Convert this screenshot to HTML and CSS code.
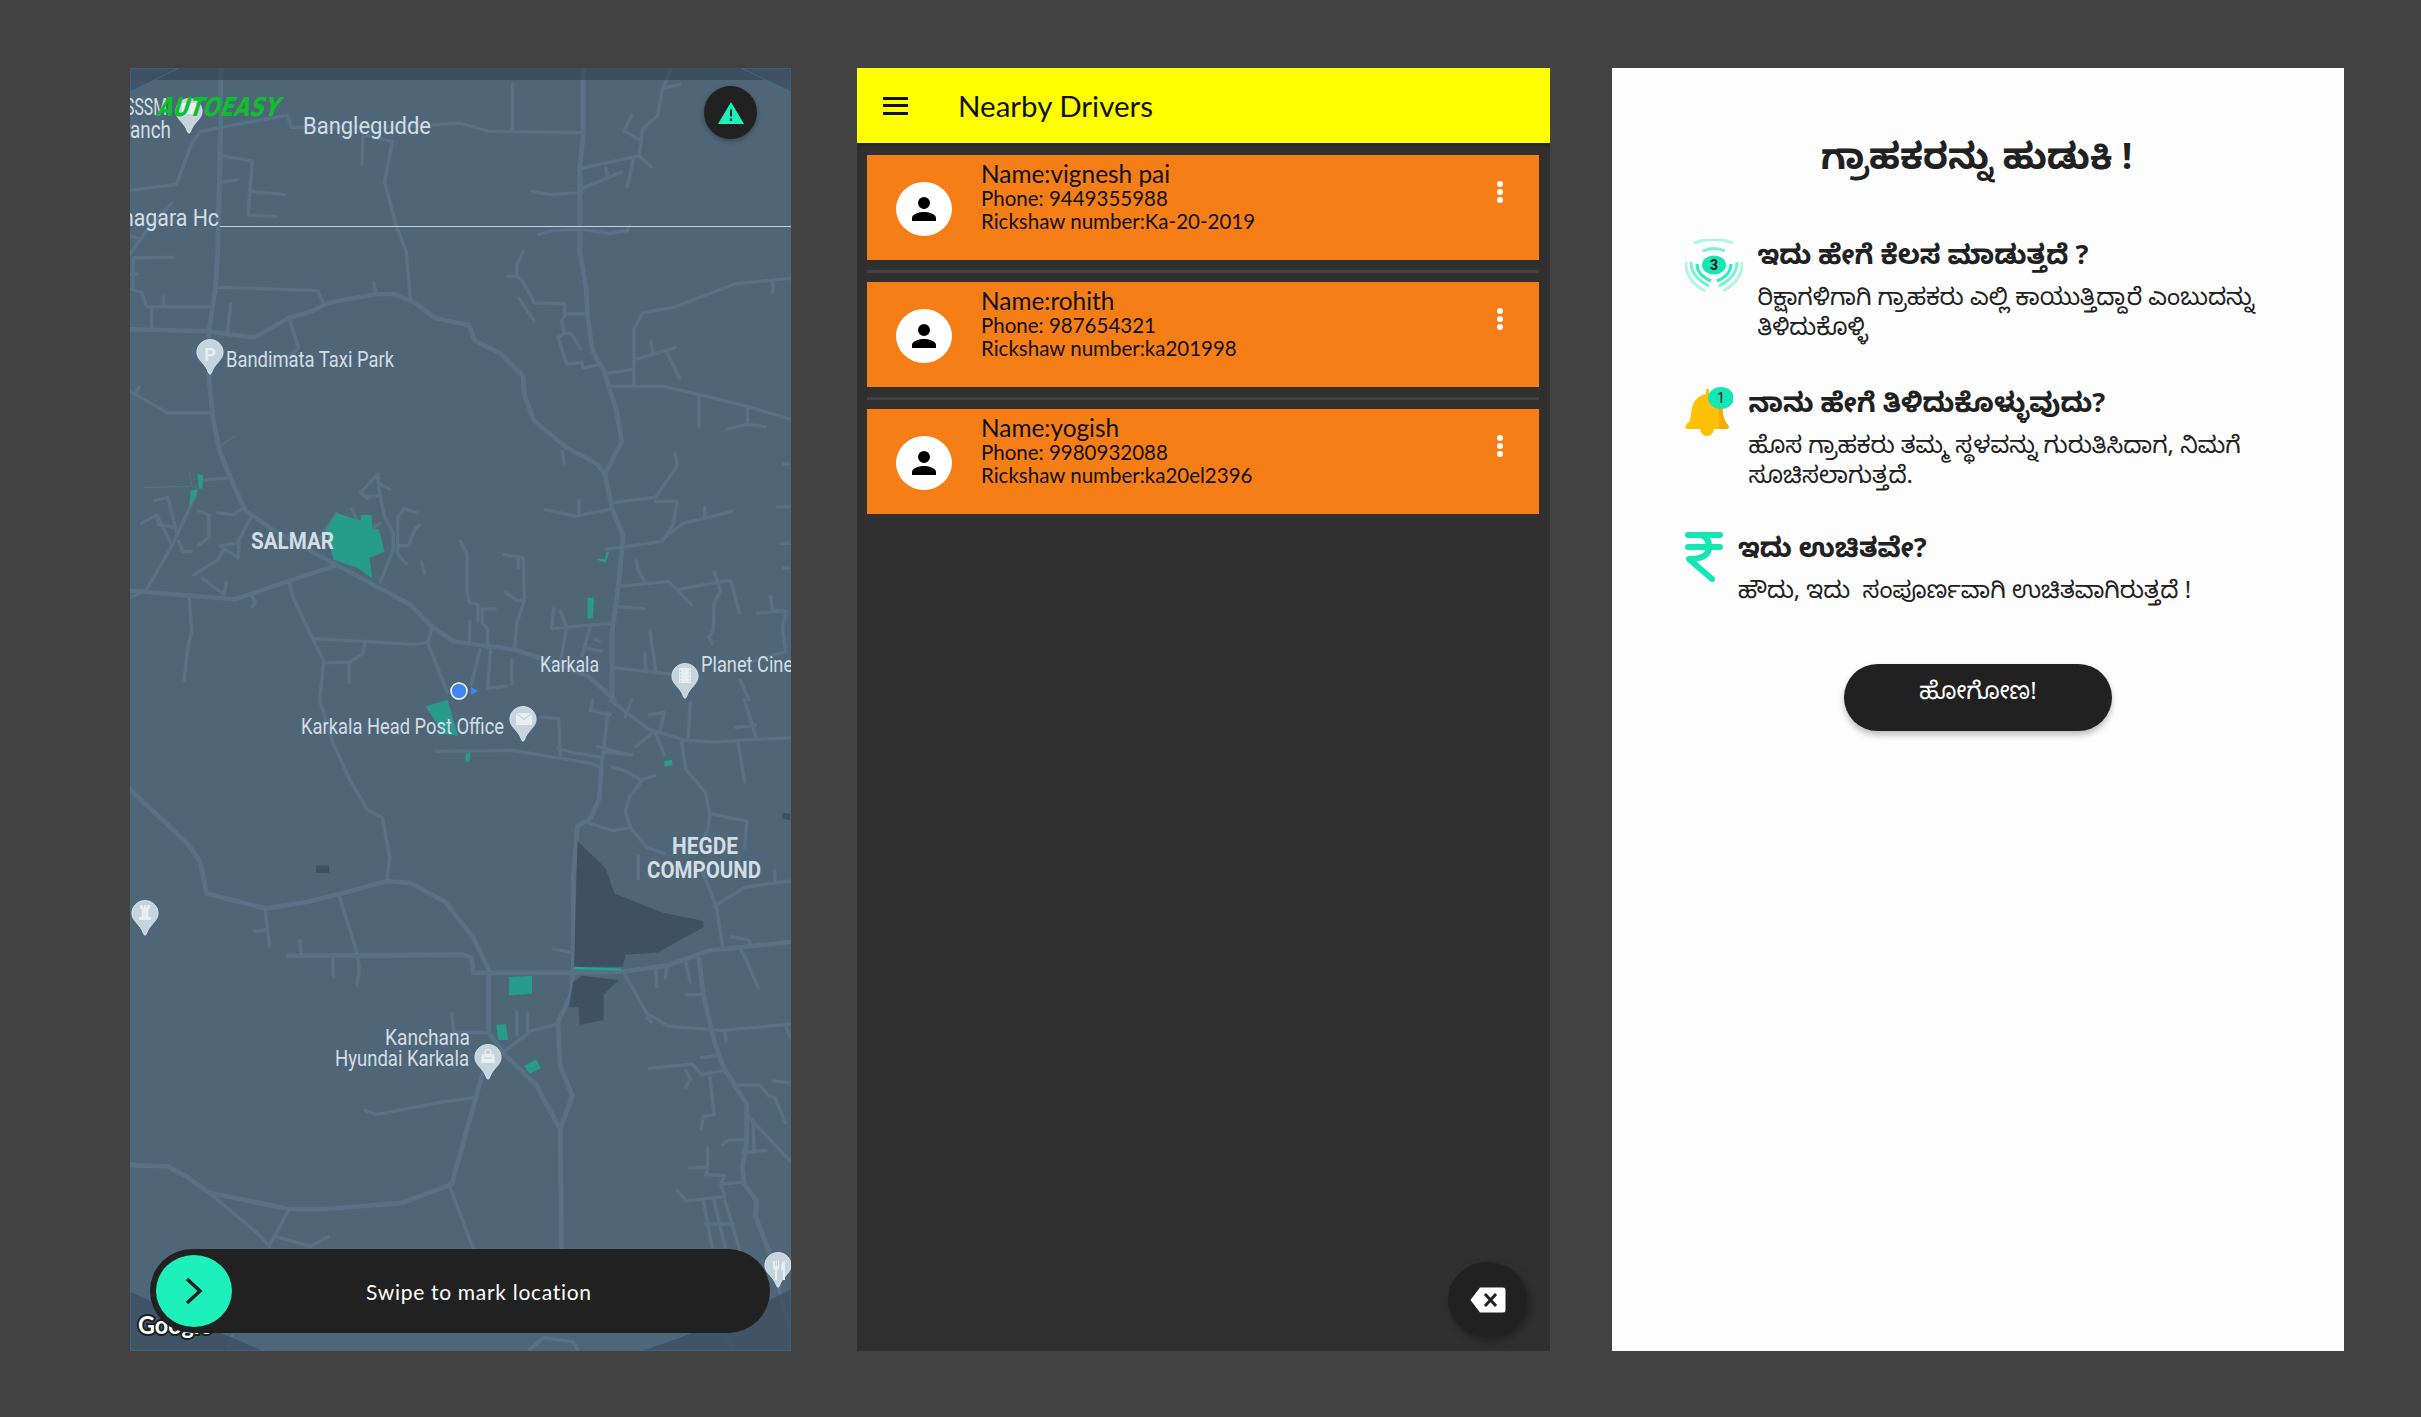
FILE: index.html
```html
<!DOCTYPE html>
<html lang="kn">
<head>
<meta charset="utf-8">
<title>AutoEasy</title>
<link rel="stylesheet" href="styles.css">
</head>
<body>
<main class="stage">

<section class="panel map-panel">
<svg class="map" viewBox="130 68 661 1283" preserveAspectRatio="none" xmlns="http://www.w3.org/2000/svg">
  <defs>
    <symbol id="pin" viewBox="-1 -1 32 42">
      <path d="M15 0C6.700 0 0 6.600 0 14.600C0 24 10 27 13.500 38.500Q15 41 16.500 38.500C20 27 30 24 30 14.600C30 6.600 23.300 0 15 0Z" fill="#c6d4de" stroke="#dfe7ed" stroke-width="1"/>
    </symbol>
  </defs>
  <rect class="land" x="130" y="68" width="661" height="1283"/>

  <g class="roads" transform="translate(120 60) scale(.4337 .408)">
    <path class="r-major" d="M232 20L232 180L225 480L220 560L205 665L205 780L215 880L230 960L265 1050L290 1105L350 1150L495 1235L670 1335L720 1390L770 1425L910 1445L1010 1480L1080 1510L1140 1568"/>
    <path class="r-major" d="M1068 20L1068 180L1060 270L1060 470L1075 560L1078 630L1090 715L1115 760L1145 860L1157 935L1118 1015L1135 1100L1160 1165L1150 1280L1135 1400L1135 1568"/>
    <path class="r-major" d="M20 660L200 665L310 680L390 632L445 615L480 595L585 575L630 573L680 595L725 632L805 650L818 688L878 720L930 775L932 820L955 885L1030 950L1100 990L1118 1015"/>
    <path class="r-major" d="M20 1300L130 1310L265 1322L395 1275L495 1240"/>
    <path d="M20 320L130 305L165 205L185 175L385 135L395 165L620 165L785 155L850 175L1065 178"/>
    <path d="M905 60L905 175M1270 20L1250 75L1240 135L1205 170L1197 235L1065 265M1250 70L1290 60M1165 175L1197 195M1180 135L1162 175M1197 235L1225 262M1183 245L1170 310M1065 315L1155 275M1120 265L1125 285M950 322L990 330L1065 325"/>
    <path d="M235 235L305 248L295 380L360 384M300 322L380 330M235 300L272 293M560 185L558 255M570 185L628 200L610 300L635 400L660 470L670 590M228 557L455 565L472 600"/>
    <path d="M585 545L590 572M390 635L412 705L380 740M255 598L248 670M20 560L50 570L62 605L205 605M100 580L100 605M73 610L73 655M20 480L60 420L120 350M30 485L30 560M30 485L122 483M20 430L50 440M20 525L40 525"/>
    <path d="M1140 800L1255 800L1335 820L1450 850L1545 880M1335 825L1335 900M1447 850L1447 890M1400 905L1445 893L1488 898M1120 768L1185 758M1130 800L1185 800L1185 660L1205 620L1280 605L1420 548L1545 535M1505 540L1505 570M1185 735L1280 705M1225 690L1228 720M1260 715L1290 780"/>
    <path d="M965 428L1000 418L1060 415L1130 425L1170 418L1175 405M930 470L915 500L915 530L895 530M915 530L930 545L955 595L1025 598L1025 630L1018 640L1025 670L1010 680L1030 745L1065 742L1068 755L1100 748M920 585L955 640M1025 622L1075 622M1025 670L1040 670L1062 708"/>
    <path d="M20 810L110 865L205 865M45 800L35 820M190 1030L245 1025M175 1065L120 1190L60 1300M50 1135L85 1115L120 1190M80 1080L110 1072L130 1155M85 1115L90 1140L125 1145M135 1180L145 1205L165 1205M20 1320L60 1300"/>
    <path d="M180 1105L205 1115L205 1170L180 1190M225 1110L260 1115L285 1098M300 1125L270 1185L230 1190L272 1220L275 1185M240 1200L225 1225L170 1262M190 1270L240 1310L245 1280M160 1320L165 1400L155 1450L148 1520M305 1315L312 1330L305 1340"/>
    <path d="M390 1280L400 1320L470 1475L460 1568M450 1418L680 1432L710 1428L720 1388M565 1425L560 1455L530 1475L470 1478M528 1478L528 1525M710 1430L755 1550"/>
    <path d="M555 1060L595 1015L597 1050L610 1120L630 1160L630 1200L600 1280M555 1060L570 1075M600 1040L622 1052M570 1070L595 1068M640 1190L640 1120L655 1100L685 1110M640 1190L665 1190L680 1150L690 1140M640 1190L640 1210L660 1235M695 1230L702 1258M535 1100L545 1125L575 1155L555 1200M575 1155L600 1135M500 1110L455 1180"/>
    <path d="M785 1180L800 1210L800 1300L805 1330L825 1335L825 1375M835 1345L865 1345M835 1345L835 1380L848 1395L848 1440M807 1375L805 1430M885 1212L930 1220L932 1325L915 1380L910 1445M918 1222L918 1245M890 1305L915 1325L930 1325"/>
    <path d="M980 1102L1050 1118L1135 1100M1058 1080L1058 1115M1135 1085L1235 1072L1285 995L1280 965M1235 1082L1285 1082L1275 1140L1250 1180L1150 1195L1120 1198M1250 1175L1300 1135L1410 1107M1348 1095L1348 1122M1020 960L1025 990M1515 1095L1545 1095M1530 990L1545 990M1525 1185L1545 1185M1530 1245L1545 1245"/>
    <path d="M1190 1225L1195 1250L1210 1280M1150 1290L1265 1278L1318 1335M1290 1297L1408 1275L1428 1355M1370 1255L1385 1300L1370 1330L1368 1395L1358 1415L1365 1430M1148 1340L1210 1345M1222 1400L1235 1495M1210 1455L1212 1500M1500 1315L1505 1350L1535 1350L1528 1395L1535 1450L1440 1480M1470 1355L1535 1350"/>
    <path d="M1000 1345L995 1395L1030 1390L1135 1380M1015 1350L1030 1390L1015 1480M1085 1385L1065 1460M1070 1440L1110 1450M1095 1420L1105 1425M1140 1490L1270 1505M855 1440L848 1540L890 1535M903 1470L903 1530M830 1445L810 1530M1430 1520L1450 1568"/>
    <path class="r-thin" d="M232 945L265 922M55 1048L160 1045M160 1010L165 1045L180 1050"/>
  </g>

  <g class="roads" transform="translate(120 700) scale(.4337 .4209)">
    <path class="r-major" d="M20 210L155 340L185 385L200 460L335 495L430 480L510 460L615 430L670 435L750 480L815 565L850 640L850 790L885 840L960 915L1015 1020L1018 1300"/>
    <path class="r-major" d="M20 1105L110 1108L150 1130L205 1170L390 1210L465 1210L650 1195L765 1150L835 890"/>
    <path class="r-major" d="M388 608L790 605L810 612L815 648L1045 648L1160 645L1265 630L1360 595L1545 575"/>
    <path class="r-major" d="M1335 615L1345 700L1370 810L1390 870L1445 960L1445 1050L1435 1110L1440 1150L1468 1190L1465 1225L1500 1320"/>
    <path class="r-major" d="M1110 160L1105 235L1085 280L1055 300L1045 420L1045 640L1040 700L1010 765L1015 870L1043 940L1015 1020"/>
    <path d="M490 100L530 190L570 260L605 280L622 375L615 430M460 0L490 100M730 122L905 120L1085 150L1110 160M335 500L345 585M310 550L340 545M505 465L548 605L552 645L546 675M415 572L418 608M490 612L492 655M1000 592L1045 600"/>
    <path d="M205 1170L320 1270L345 1300M390 1210L345 1295M360 1275L440 1298L480 1275M760 1155L815 1305M565 975L590 985L745 955L815 945M885 835L950 785L1010 770M915 740L915 795M940 745L940 785M765 745L770 790L850 790"/>
    <path d="M1160 645L1190 700L1215 745L1265 775L1390 785L1545 770M1215 755L1225 765M1235 640L1238 680M1260 635L1258 660M1305 625L1315 670M1305 700L1340 700M1430 590L1445 620L1472 685M1410 562L1450 570L1455 585M1395 790L1397 810M1535 775L1545 800"/>
    <path d="M1340 850L1375 845M1220 875L1320 865L1340 890L1395 880M1360 895L1370 985L1345 990L1340 1020M1305 880L1315 900L1305 920M1425 915L1475 915L1495 940L1510 945L1535 1005M1505 905L1545 910M1445 985L1545 1095M1460 1005L1462 1075M1435 1075L1490 1070M1390 1055L1405 1045L1445 1045"/>
    <path d="M1355 1065L1355 1115L1350 1130M1312 1112L1355 1110M1355 1128L1395 1130L1385 1150L1440 1145M1385 1150L1395 1180M1285 1165L1305 1190L1395 1180M1345 1190L1365 1300M1370 1190L1395 1300M1395 1190L1430 1310M1350 1245L1415 1245M1500 1320L1545 1500"/>
    <path d="M1130 0L1220 70L1300 95L1370 100L1440 95L1545 90M1125 30L1110 160M1235 80L1255 130M1100 110L1175 130M1120 125L1180 130M1135 160L1170 170L1200 190L1232 180M1205 190L1175 230L1165 265L1178 305L1215 350L1255 365M1080 292L1135 310L1170 305"/>
    <path d="M1295 100L1305 165L1350 220L1360 270L1445 288L1440 350M1360 270L1355 310L1340 340M1425 100L1440 195M1370 490L1440 445L1545 430M1340 400L1375 490L1390 590M1510 405L1510 430M1195 370L1195 425M1190 110L1225 80"/>
    <path d="M1090 0L1085 25L1130 35M1180 0L1165 40M1220 35L1255 30L1245 75M1315 5L1310 90M1440 0L1465 85M1420 65L1465 60M1015 130L1012 45L970 40M1010 115L1045 125L1105 135M945 1543L975 1515L1045 1525L1055 1543M260 1510L250 1543M1390 1500L1415 1543"/>
  </g>

  <g class="parks">
    <g transform="translate(120 60) scale(.4337 .408)">
      <path d="M500 1110L555 1130L555 1115L580 1115L582 1150L597 1150L610 1205L575 1220L582 1270L548 1245L492 1225L475 1150Z"/>
      <path d="M160 1092L163 1055L180 1052L165 1090ZM178 1015L192 1018L190 1050L182 1050ZM1100 1225L1120 1232L1128 1205L1122 1205L1118 1224L1100 1222ZM1078 1318L1093 1318L1090 1368L1078 1368Z"/>
    </g>
    <g transform="translate(120 700) scale(.4337 .4209)">
      <path d="M705 15L755 0L780 85L745 80ZM797 127L808 125L806 147L797 147ZM1255 145L1273 142L1274 155L1256 158ZM897 658L950 655L950 698L897 702ZM868 772L890 770L895 808L872 808ZM932 870L960 853L970 875L945 888Z"/>
    </g>
  </g>

  <g class="blocks" transform="translate(120 700) scale(.4337 .4209)">
    <path d="M1055 335L1120 400L1140 460L1250 505L1345 525L1345 540L1240 600L1165 605L1160 634L1047 634Z"/>
    <path d="M1065 655L1150 665L1115 700L1115 760L1060 772L1058 730L1035 730L1045 670Z"/>
    <path d="M452 393L482 393L482 411L452 411ZM1528 268L1545 270L1545 285L1528 283Z"/>
    <path class="green-line" d="M1047 634L1155 638L1155 642L1047 640Z"/>
  </g>

  <path class="hairline" d="M220 226.500H791"/>

  <rect class="statusband" x="130" y="68" width="661" height="12"/>
  <path class="corner" d="M130 92L179 68L130 68Z"/>
  <path class="corner" d="M741 68L791 92L791 68Z"/>
  <path class="corner" d="M130 1291Q190 1320 265 1351L130 1351Z"/>
  <path class="corner" d="M791 1289Q720 1325 640 1351L791 1351Z"/>

  <use href="#pin" x="175" y="97" width="28" height="38"/>
  <use href="#pin" x="196" y="338" width="28" height="38"/>
  <use href="#pin" x="671" y="662" width="28" height="38"/>
  <use href="#pin" x="509" y="705" width="28" height="38"/>
  <use href="#pin" x="131" y="899" width="28" height="38"/>
  <use href="#pin" x="474" y="1043" width="28" height="38"/>
  <use href="#pin" x="764" y="1251" width="28" height="38"/>

  <g class="pin-glyph">
    <path d="M182 103h14v11h-14z"/>
    <text class="pin-letter" x="210" y="361" text-anchor="middle">P</text>
    <path d="M679 668h12v15h-12z"/>
    <path class="pin-dots" d="M680.500 670v12M689.500 670v12"/>
    <path d="M516 713h16v12h-16z"/>
    <path class="pin-line" d="M516 713l8 6.500 8-6.500"/>
    <path d="M139 920V917H141.500L142 910L140 908V905H142.500V907H144V905H146V907H147.500V905H150V908L148 910L148.500 917H151V920Z"/>
    <path d="M482 1054H494L495 1063H481Z"/>
    <path class="pin-hand" d="M485 1054q0-4.500 3-4.500t3 4.500"/>
    <path class="pin-line" d="M484.500 1057q3.500 3 7 0"/>
    <path d="M773 1261v7q0 2 2 2v10h2v-10q2 0 2-2v-7h-1v5h-1v-5h-1v5h-1v-5zM783 1261q-2 3-2 9h2v10h2v-19z"/>
  </g>

  <path class="loc-arrow" d="M471 687l7 4-7 4z"/>
  <circle class="loc-dot" cx="459" cy="691" r="8"/>

  <g class="labels">
    <text x="125" y="115" textLength="42" lengthAdjust="spacingAndGlyphs">SSSM</text>
    <text x="124" y="138" textLength="47" lengthAdjust="spacingAndGlyphs">ranch</text>
    <text x="303" y="134" textLength="128" lengthAdjust="spacingAndGlyphs">Banglegudde</text>
    <text x="122" y="226" textLength="97" lengthAdjust="spacingAndGlyphs">nagara Hc</text>
    <text class="small" x="226" y="367" textLength="168" lengthAdjust="spacingAndGlyphs">Bandimata Taxi Park</text>
    <text class="bold" x="251" y="549" textLength="83" lengthAdjust="spacingAndGlyphs">SALMAR</text>
    <text class="small" x="540" y="672" textLength="59" lengthAdjust="spacingAndGlyphs">Karkala</text>
    <text class="small" x="701" y="672" textLength="118" lengthAdjust="spacingAndGlyphs">Planet Cinema</text>
    <text class="small" x="301" y="734" textLength="203" lengthAdjust="spacingAndGlyphs">Karkala Head Post Office</text>
    <text class="bold" x="672" y="854" textLength="66" lengthAdjust="spacingAndGlyphs">HEGDE</text>
    <text class="bold" x="647" y="878" textLength="114" lengthAdjust="spacingAndGlyphs">COMPOUND</text>
    <text class="small" x="385" y="1045" textLength="85" lengthAdjust="spacingAndGlyphs">Kanchana</text>
    <text class="small" x="335" y="1066" textLength="134" lengthAdjust="spacingAndGlyphs">Hyundai Karkala</text>
    <text class="small" x="757" y="1284" textLength="6" lengthAdjust="spacingAndGlyphs">r</text>
  </g>
  <text class="autoeasy" transform="translate(156 116) skewX(-18)" textLength="122" lengthAdjust="spacingAndGlyphs">AUTOEASY</text>
  <text class="google" x="138" y="1334" textLength="74" lengthAdjust="spacingAndGlyphs">Google</text>
</svg>

<button class="alert-btn" type="button" aria-label="Alert">
  <svg width="26" height="22" viewBox="0 0 26 22"><path d="M13 0L26 22H0Z" fill="#1df0bb"/><path d="M12 7.500h2v7h-2zM12 16.500h2v2.500h-2z" fill="#212121"/></svg>
</button>

<div class="swipe">
  <span class="swipe-handle">
    <svg width="20" height="28" viewBox="0 0 20 28"><path d="M3 2L16 14L3 26" fill="none" stroke="#212121" stroke-width="3.500"/></svg>
  </span>
  <span class="swipe-label">Swipe to mark location</span>
</div>
</section>

<section class="panel drivers">
  <header class="appbar">
    <span class="burger"><i></i><i></i><i></i></span>
    <h1 class="appbar-title">Nearby Drivers</h1>
  </header>
  <div class="driver-list">
    <article class="card">
      <span class="avatar"><svg width="36" height="36" viewBox="0 0 24 24"><path d="M12 12a4 4 0 1 0 0-8 4 4 0 0 0 0 8zm0 2c-2.700 0-8 1.300-8 4v2h16v-2c0-2.700-5.300-4-8-4z"/></svg></span>
      <div class="card-text">
        <p class="card-name">Name:vignesh pai</p>
        <p class="card-line">Phone: 9449355988</p>
        <p class="card-line">Rickshaw number:Ka-20-2019</p>
      </div>
      <span class="kebab"><i></i><i></i><i></i></span>
    </article>
    <hr class="rule">
    <article class="card">
      <span class="avatar"><svg width="36" height="36" viewBox="0 0 24 24"><path d="M12 12a4 4 0 1 0 0-8 4 4 0 0 0 0 8zm0 2c-2.700 0-8 1.300-8 4v2h16v-2c0-2.700-5.300-4-8-4z"/></svg></span>
      <div class="card-text">
        <p class="card-name">Name:rohith</p>
        <p class="card-line">Phone: 987654321</p>
        <p class="card-line">Rickshaw number:ka201998</p>
      </div>
      <span class="kebab"><i></i><i></i><i></i></span>
    </article>
    <hr class="rule">
    <article class="card">
      <span class="avatar"><svg width="36" height="36" viewBox="0 0 24 24"><path d="M12 12a4 4 0 1 0 0-8 4 4 0 0 0 0 8zm0 2c-2.700 0-8 1.300-8 4v2h16v-2c0-2.700-5.300-4-8-4z"/></svg></span>
      <div class="card-text">
        <p class="card-name">Name:yogish</p>
        <p class="card-line">Phone: 9980932088</p>
        <p class="card-line">Rickshaw number:ka20el2396</p>
      </div>
      <span class="kebab"><i></i><i></i><i></i></span>
    </article>
  </div>
  <button class="fab" type="button" aria-label="Clear">
    <svg width="36" height="26" viewBox="0 0 36 26"><path d="M10 0.500H33Q35.500 0.500 35.500 3V23Q35.500 25.500 33 25.500H10L0.500 13Z" fill="#fff"/><path d="M15 7L26 19M26 7L15 19" stroke="#212121" stroke-width="3" fill="none"/></svg>
  </button>
</section>

<section class="panel intro">
  <h2 class="intro-title">ಗ್ರಾಹಕರನ್ನು ಹುಡುಕಿ !</h2>
  <div class="faq faq-one">
    <svg class="faq-icon" width="58" height="54" viewBox="0 0 58 54">
      <g fill="none" stroke="#1de9b6" stroke-width="3">
        <path opacity=".35" d="M9 4Q29 -3 48 4M1 23Q0 41 20 52M57 23Q58 41 38 52"/>
        <path opacity=".6" d="M18 12Q29 7 40 12M6 23Q6 38 24 47M52 23Q52 38 34 47"/>
        <path opacity=".9" d="M12 25Q12 36 26 42M46 25Q46 36 32 42"/>
      </g>
      <ellipse cx="29" cy="26" rx="12" ry="9.500" fill="#15e6b4"/>
      <text class="badge-num" x="29" y="31" text-anchor="middle">3</text>
    </svg>
    <div class="faq-body">
      <h3 class="faq-q">ಇದು ಹೇಗೆ ಕೆಲಸ ಮಾಡುತ್ತದೆ ?</h3>
      <p class="faq-a">ರಿಕ್ಷಾಗಳಿಗಾಗಿ ಗ್ರಾಹಕರು ಎಲ್ಲಿ ಕಾಯುತ್ತಿದ್ದಾರೆ ಎಂಬುದನ್ನು ತಿಳಿದುಕೊಳ್ಳಿ</p>
    </div>
  </div>
  <div class="faq faq-two">
    <svg class="faq-icon" width="48" height="50" viewBox="0 0 48 50">
      <path d="M21 2h3v5q13 3 14 20q1 7 5 11q2 3-1 4H2q-3-1-1-4q5-4 5-11q1-17 15-20z" fill="#ffc107"/>
      <path d="M30 9q8 5 8 18q1 7 5 11q2 3-1 4h-8q2-15-4-33z" fill="#f4ab00"/>
      <path d="M15 42h14q-1 7-7 7t-7-7z" fill="#ffc107"/>
      <ellipse cx="36" cy="11" rx="13" ry="11" fill="#15e6b4"/>
      <text class="badge-num thin" x="36" y="16" text-anchor="middle">1</text>
    </svg>
    <div class="faq-body">
      <h3 class="faq-q">ನಾನು ಹೇಗೆ ತಿಳಿದುಕೊಳ್ಳುವುದು?</h3>
      <p class="faq-a">ಹೊಸ ಗ್ರಾಹಕರು ತಮ್ಮ ಸ್ಥಳವನ್ನು ಗುರುತಿಸಿದಾಗ, ನಿಮಗೆ ಸೂಚಿಸಲಾಗುತ್ತದೆ.</p>
    </div>
  </div>
  <div class="faq faq-three">
    <svg class="faq-icon" width="38" height="50" viewBox="0 0 38 50">
      <path d="M3 3H35M3 15H35M3 3H13Q24 3 24 15Q24 27 4 27L27 47" fill="none" stroke="#15e6b4" stroke-width="6" stroke-linecap="round" stroke-linejoin="round"/>
    </svg>
    <div class="faq-body">
      <h3 class="faq-q">ಇದು ಉಚಿತವೇ?</h3>
      <p class="faq-a">ಹೌದು, ಇದು&nbsp; ಸಂಪೂರ್ಣವಾಗಿ ಉಚಿತವಾಗಿರುತ್ತದೆ !</p>
    </div>
  </div>
  <button class="go-btn" type="button">ಹೋಗೋಣ!</button>
</section>

</main>
</body>
</html>
```

FILE: styles.css
```css
* { box-sizing: border-box; }

html, body { margin: 0; height: 100%; }

body {
  background: #424242;
  overflow: hidden;
  font-family: "Lato", "Noto Sans", "Noto Sans Kannada", sans-serif;
}

.stage {
  display: flex;
  align-items: flex-start;
  padding: 68px 0 0 130px;
}

.panel {
  position: relative;
  height: 1283px;
  flex: none;
  overflow: hidden;
}

/* map */
.map-panel { width: 661px; }
.map { display: block; width: 100%; height: 100%; }
.land { fill: #4f6679; }

.roads path {
  fill: none;
  stroke: #587187;
  stroke-width: 8;
  stroke-linejoin: round;
  stroke-linecap: round;
}
.roads .r-major { stroke-width: 11; }
.roads .r-thin { stroke-width: 1.500; stroke: #637b8f; }

.parks path { fill: #279b8d; }
.blocks path { fill: #3e5162; }
.blocks .green-line { fill: #1fa893; }

.hairline { stroke: #c5d1da; stroke-width: 1; fill: none; }
.statusband { fill: #2a3742; opacity: .5; }
.corner { fill: #3f5263; opacity: .85; stroke: #3a6ea5; stroke-width: 1; }

.pin-glyph path { fill: #e8eef2; }
.pin-glyph .pin-line { fill: none; stroke: #c6d4de; stroke-width: 1.200; }
.pin-glyph .pin-hand { fill: none; stroke: #e8eef2; stroke-width: 1.500; }
.pin-glyph .pin-dots { fill: none; stroke: #c6d4de; stroke-width: 1.500; stroke-dasharray: 2 1.500; }
.pin-letter { font: 700 18px "Roboto", sans-serif; fill: #e8eef2; }

.loc-dot { fill: #4285f4; stroke: #fff; stroke-width: 1.500; }
.loc-arrow { fill: #4285f4; }

.labels text {
  font: 400 24px "Roboto", sans-serif;
  fill: #d3dde4;
}
.labels .small { font-size: 22px; }
.labels .bold { font-weight: 700; font-size: 24px; }

.autoeasy {
  font: 700 26px "DejaVu Sans", sans-serif;
  fill: #0cbf2f;
}
.google {
  font: 700 24px "Lato", sans-serif;
  fill: #fff;
  stroke: #1d2124;
  stroke-width: 4px;
  paint-order: stroke;
}

.alert-btn {
  position: absolute;
  left: 574px;
  top: 18px;
  width: 53px;
  height: 53px;
  border: 0;
  padding: 0;
  border-radius: 50%;
  background: #212121;
  box-shadow: 0 2px 5px rgba(0, 0, 0, .3);
  display: flex;
  align-items: center;
  justify-content: center;
}

.swipe {
  position: absolute;
  left: 20px;
  top: 1181px;
  width: 620px;
  height: 84px;
  border-radius: 42px;
  background: #212121;
  display: flex;
  align-items: center;
  padding-left: 6px;
}
.swipe-handle {
  width: 76px;
  height: 72px;
  border-radius: 50%;
  background: #1df0bb;
  display: flex;
  align-items: center;
  justify-content: center;
  flex: none;
}
.swipe-label {
  margin-left: 134px;
  color: #fff;
  font-size: 21px;
  letter-spacing: .7px;
  white-space: nowrap;
}

/* drivers */
.drivers { width: 693px; margin-left: 66px; background: #303030; }

.appbar {
  height: 75px;
  background: #ffff00;
  display: flex;
  align-items: center;
  padding-left: 26px;
  box-shadow: 0 2px 4px rgba(0, 0, 0, .35);
}
.burger { display: flex; flex-direction: column; gap: 4.500px; width: 25px; flex: none; }
.burger i { display: block; height: 3px; background: #111; }
.appbar-title {
  margin: 0 0 0 50px;
  font-size: 29.500px;
  font-weight: 400;
  color: #111;
  white-space: nowrap;
}

.driver-list { padding: 12px 11px 0 10px; }

.card {
  height: 105px;
  background: #f67e17;
  display: flex;
  align-items: flex-start;
  padding: 27px 0 0 29px;
}
.avatar {
  width: 56px;
  height: 54px;
  border-radius: 50%;
  background: #fff;
  flex: none;
  display: flex;
  align-items: center;
  justify-content: center;
}
.card-text { margin: -21.500px 0 0 29px; color: #111; flex: 1; }
.card-name { margin: 0; font-size: 24.400px; line-height: 26px; }
.card-line { margin: 0; font-size: 20.500px; line-height: 23.500px; }
.kebab {
  display: flex;
  flex-direction: column;
  gap: 2px;
  margin: -1px 36px 0 0;
}
.kebab i { display: block; width: 6px; height: 6px; border-radius: 50%; background: #fff; }

.rule { height: 3px; margin: 10px 0 9px; border: 0; background: #424242; }

.fab {
  position: absolute;
  right: 23px;
  bottom: 14px;
  width: 79px;
  height: 75px;
  border: 0;
  padding: 0;
  border-radius: 50%;
  background: #212121;
  box-shadow: 3px 4px 10px rgba(0, 0, 0, .35);
  display: flex;
  align-items: center;
  justify-content: center;
}

/* intro */
.intro {
  width: 732px;
  margin-left: 62px;
  background: #fdfdfd;
  padding: 64px 60px 0 73px;
  color: #212121;
  font-family: "Noto Sans", "Noto Sans Kannada", "Lato", sans-serif;
}
.intro-title {
  margin: 0 0 56px;
  font-size: 36px;
  line-height: 48px;
  font-weight: 700;
  text-align: center;
  padding-right: 16px;
}
.faq { display: flex; align-items: flex-start; }
.faq-icon { flex: none; margin-top: 3px; }
.faq-body { flex: 1; }
.faq-q { margin: 0; font-size: 27px; line-height: 36px; font-weight: 700; }
.faq-a { margin: 10px 0 0; font-size: 23.800px; line-height: 29.500px; }
.faq-one { gap: 14.500px; }
.faq-two { gap: 15.500px; margin-top: 43px; }
.faq-three { gap: 15px; margin-top: 40px; }
.badge-num { font: 700 14px "Roboto", sans-serif; fill: #111; }
.badge-num.thin { font-weight: 400; }

.go-btn {
  display: block;
  width: 268px;
  height: 67px;
  margin: 59px 0 0 159px;
  border: 0;
  border-radius: 34px;
  background: #212121;
  color: #fff;
  font: inherit;
  font-size: 24px;
  box-shadow: 0 4px 6px rgba(0, 0, 0, .25);
  padding-bottom: 10px;
}
```
